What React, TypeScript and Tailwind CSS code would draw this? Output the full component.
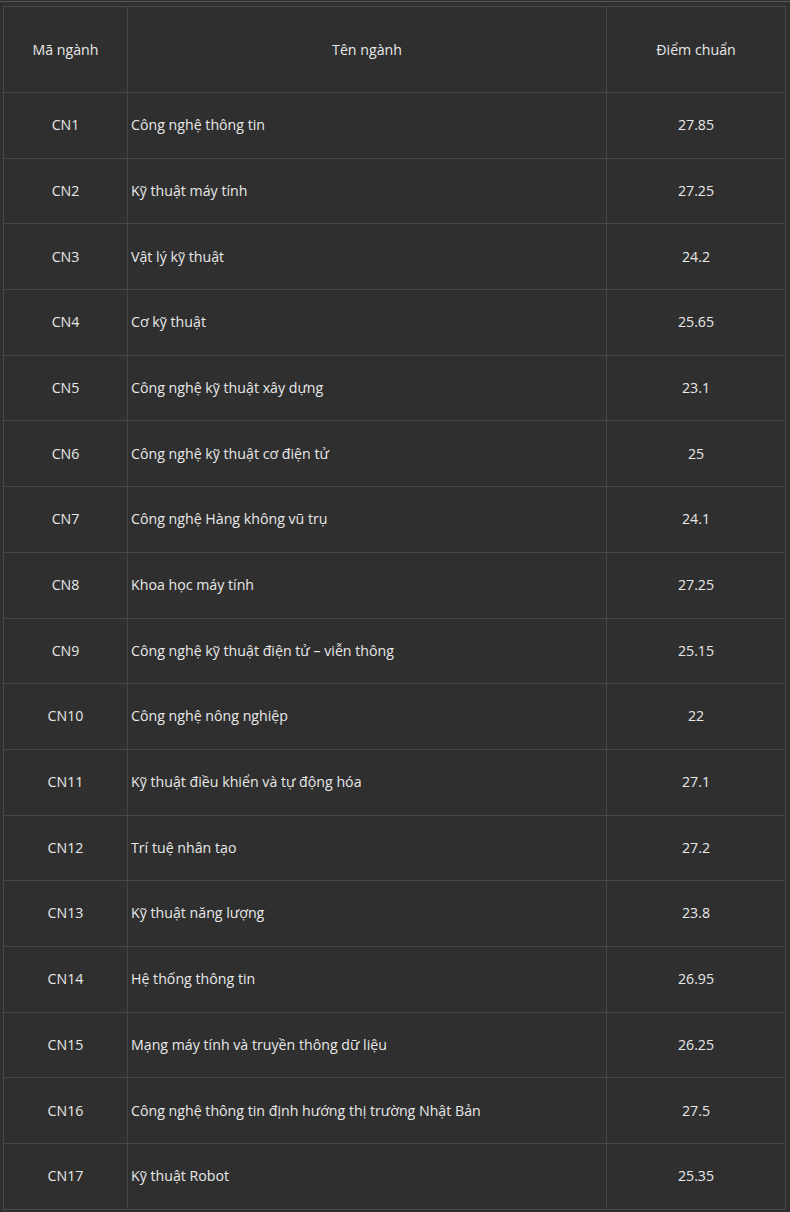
const rows = [
	['CN1', 'Công nghệ thông tin', '27.85'],
	['CN2', 'Kỹ thuật máy tính', '27.25'],
	['CN3', 'Vật lý kỹ thuật', '24.2'],
	['CN4', 'Cơ kỹ thuật', '25.65'],
	['CN5', 'Công nghệ kỹ thuật xây dựng', '23.1'],
	['CN6', 'Công nghệ kỹ thuật cơ điện tử', '25'],
	['CN7', 'Công nghệ Hàng không vũ trụ', '24.1'],
	['CN8', 'Khoa học máy tính', '27.25'],
	['CN9', 'Công nghệ kỹ thuật điện tử – viễn thông', '25.15'],
	['CN10', 'Công nghệ nông nghiệp', '22'],
	['CN11', 'Kỹ thuật điều khiển và tự động hóa', '27.1'],
	['CN12', 'Trí tuệ nhân tạo', '27.2'],
	['CN13', 'Kỹ thuật năng lượng', '23.8'],
	['CN14', 'Hệ thống thông tin', '26.95'],
	['CN15', 'Mạng máy tính và truyền thông dữ liệu', '26.25'],
	['CN16', 'Công nghệ thông tin định hướng thị trường Nhật Bản', '27.5'],
	['CN17', 'Kỹ thuật Robot', '25.35'],
]

export default function App() {
	return (
		<div className="h-[1212px] w-[790px] bg-[#2f2f2f] font-['Open_Sans',sans-serif] text-[14.2px] text-[#e8e8e8]">
			<div className="h-px translate-y-px bg-[#565656]" />
			<div className="pt-[5px] pl-[3px] pr-[4px]">
				<table className="w-[783px] table-fixed border-collapse border border-[#474747]">
					<colgroup>
						<col className="w-[124px]" />
						<col className="w-[479px]" />
						<col />
					</colgroup>
					<thead>
						<tr className="h-[86px]">
							<th className="border border-[#474747] text-center font-normal">Mã ngành</th>
							<th className="border border-[#474747] text-center font-normal">Tên ngành</th>
							<th className="border border-[#474747] text-center font-normal">Điểm chuẩn</th>
						</tr>
					</thead>
					<tbody>
						{rows.map(([code, name, score]) => (
							<tr key={code} className="h-[65.7px]">
								<td className="border border-[#474747] pb-px text-center">{code}</td>
								<td className="border border-[#474747] pb-px pl-[3px]">{name}</td>
								<td className="border border-[#474747] pb-px text-center">{score}</td>
							</tr>
						))}
					</tbody>
				</table>
			</div>
		</div>
	)
}
